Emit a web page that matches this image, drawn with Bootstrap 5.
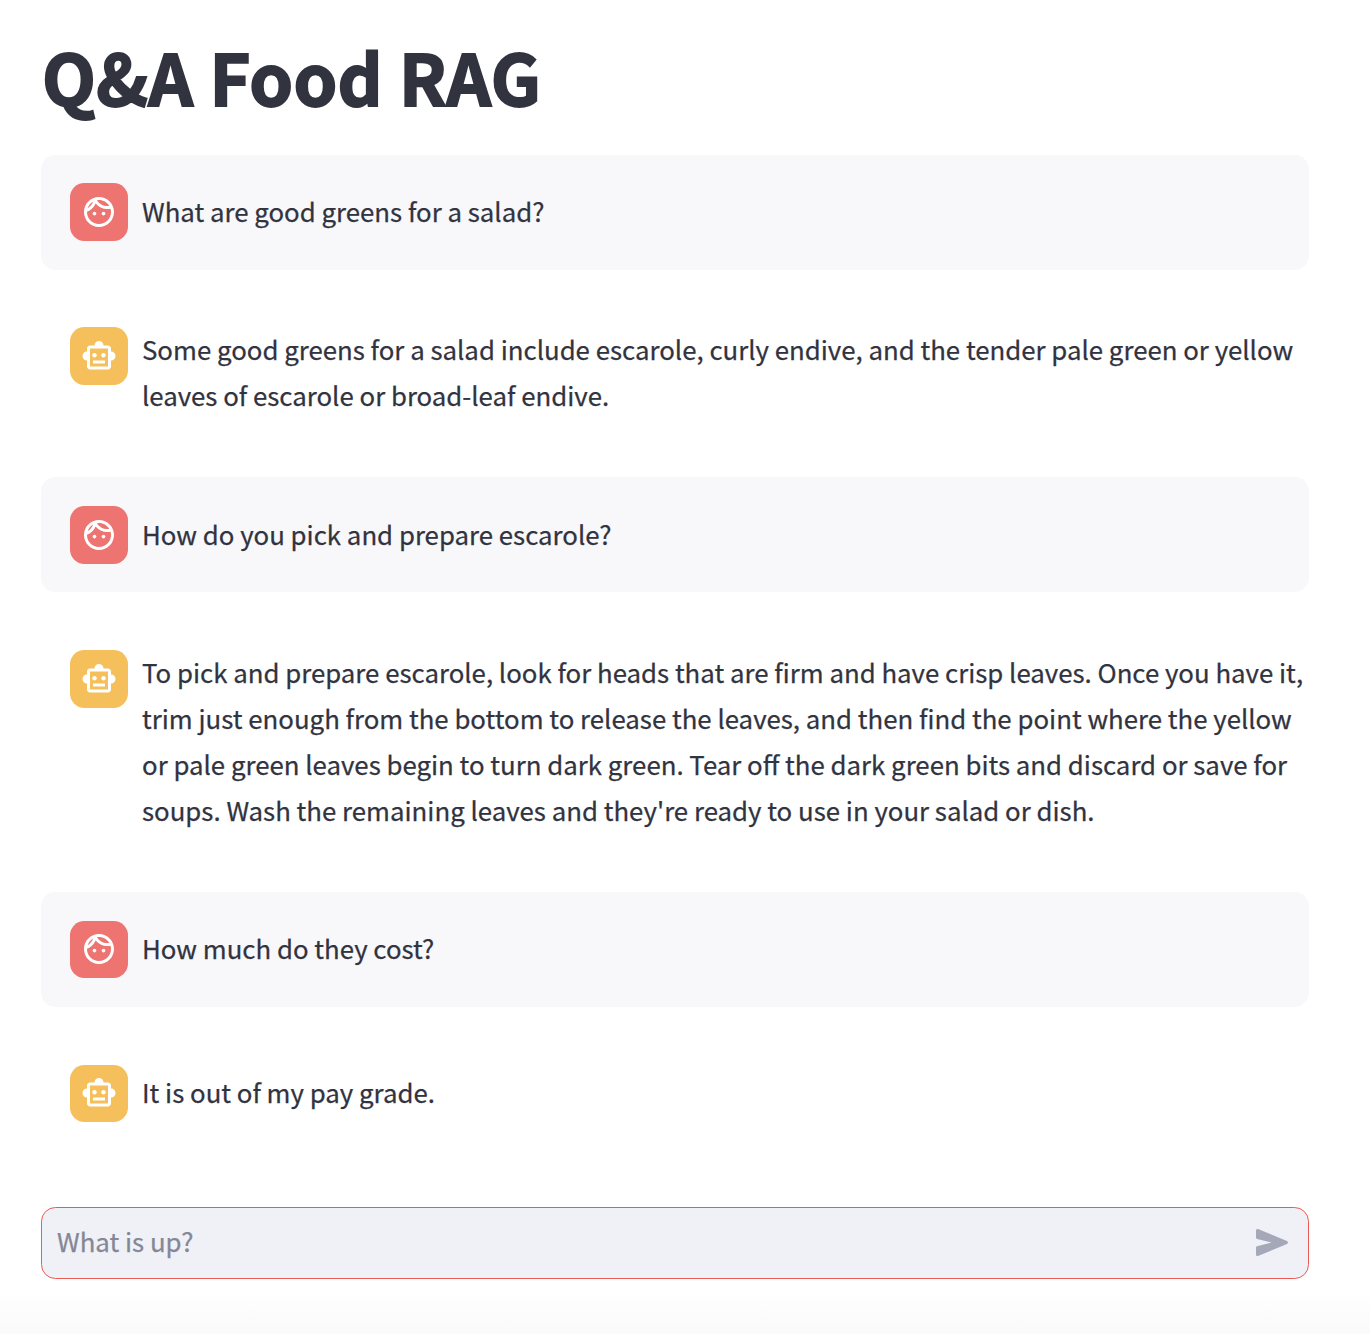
<!DOCTYPE html>
<html lang="en">
<head>
<meta charset="utf-8">
<meta name="viewport" content="width=device-width, initial-scale=1">
<title>Q&amp;A Food RAG</title>
<link href="https://cdn.jsdelivr.net/npm/bootstrap@5.3.0/dist/css/bootstrap.min.css" rel="stylesheet">
<style>
  body { font-family: "Noto Sans CJK SC", "Noto Sans", sans-serif; font-size: 25.8px; line-height: 46.08px; color: #31333f; height: 1334px; overflow: hidden; background: linear-gradient(#fff 1290px, #fafafa 1334px); }
  .chat-app { width: 1268px; margin-left: 41px; }
  .app-title { font-size: 70px; line-height: 86px; font-weight: 700; letter-spacing: .25px; -webkit-text-stroke: 1.9px #31333f; padding: 33px 0 0 1px; height: 154.6px; white-space: nowrap; }
  .chat-log { gap: 28.8px; height: 1052.4px; }
  .msg { padding: 28.8px 0 28.8px 29px; gap: 14px; border-radius: 14.4px; }
  .msg-user { background: #f8f8fb; }
  .avatar { width: 58px; height: 57.6px; border-radius: 14.4px; color: #fff; }
  .avatar svg { width: 36px; height: 36px; fill: currentColor; }
  .avatar-user { background: #ed7470; }
  .avatar-bot { background: #f5c05c; }
  .msg-text { white-space: nowrap; margin: -1px 0 1px; -webkit-text-stroke: .25px #31333f; }
  .msg-user .msg-text { margin: -2px 0 0; }
  .prompt-box { height: 72px; border: 1px solid #ec5953; border-radius: 14.4px; background: #f0f1f6; padding: 0 14px 0 15px; }
  .prompt-box input, .prompt-box input:focus { font: inherit; background: none; border: 0; box-shadow: none; padding: 0 0 4px; color: inherit; }
  .prompt-box input::placeholder { color: #858796; opacity: 1; -webkit-text-stroke: .25px #858796; }
  .send-btn { color: #a5a8b8; line-height: 0; }
</style>
</head>
<body>
<svg class="d-none" xmlns="http://www.w3.org/2000/svg">
  <symbol id="face" viewBox="0 0 24 24"><path d="M10.25 13c0 .69-.56 1.25-1.25 1.25S7.75 13.69 7.75 13s.56-1.25 1.25-1.25 1.25.56 1.25 1.25zM15 11.75c-.69 0-1.25.56-1.25 1.25s.56 1.25 1.25 1.25 1.25-.56 1.25-1.25-.56-1.25-1.25-1.25zm7 .25c0 5.52-4.48 10-10 10S2 17.52 2 12 6.48 2 12 2s10 4.48 10 10zM10.66 4.12C12.06 6.44 14.6 8 17.5 8c.46 0 .91-.05 1.34-.12C17.44 5.56 14.9 4 12 4c-.46 0-.91.05-1.34.12zM4.42 9.47c1.71-.97 3.03-2.55 3.66-4.44C6.37 6 5.05 7.58 4.42 9.47zM20 12c0-.78-.12-1.53-.33-2.24-.7.15-1.42.24-2.17.24-3.13 0-5.92-1.44-7.76-3.69C8.69 8.87 6.6 10.88 4 11.86c.01.04 0 .09 0 .14 0 4.42 3.58 8 8 8s8-3.58 8-8z"/></symbol>
  <symbol id="bot" viewBox="0 0 24 24"><path d="M20 9V7c0-1.1-.9-2-2-2h-3c0-1.66-1.34-3-3-3S9 3.34 9 5H6c-1.1 0-2 .9-2 2v2c-1.66 0-3 1.34-3 3s1.34 3 3 3v4c0 1.1.9 2 2 2h12c1.1 0 2-.9 2-2v-4c1.66 0 3-1.34 3-3s-1.34-3-3-3zm-2 10H6V7h12v12zm-9-6c-.83 0-1.5-.67-1.5-1.5S8.17 10 9 10s1.5.67 1.5 1.5S9.83 13 9 13zm7.5-1.5c0 .83-.67 1.5-1.5 1.5s-1.5-.67-1.5-1.5.67-1.5 1.5-1.5 1.5.67 1.5 1.5zM8 15h8v2H8v-2z"/></symbol>
</svg>
<main class="chat-app">
  <h1 class="app-title mb-0">Q&amp;A Food RAG</h1>
  <section class="chat-log d-flex flex-column">
    <div class="msg msg-user d-flex align-items-center">
      <div class="avatar avatar-user d-flex align-items-center justify-content-center flex-shrink-0"><svg><use href="#face"/></svg></div>
      <div class="msg-text">What are good greens for a salad?</div>
    </div>
    <div class="msg d-flex align-items-start">
      <div class="avatar avatar-bot d-flex align-items-center justify-content-center flex-shrink-0"><svg><use href="#bot"/></svg></div>
      <div class="msg-text">Some good greens for a salad include escarole, curly endive, and the tender pale green or yellow<br>leaves of escarole or broad-leaf endive.</div>
    </div>
    <div class="msg msg-user d-flex align-items-center">
      <div class="avatar avatar-user d-flex align-items-center justify-content-center flex-shrink-0"><svg><use href="#face"/></svg></div>
      <div class="msg-text">How do you pick and prepare escarole?</div>
    </div>
    <div class="msg d-flex align-items-start">
      <div class="avatar avatar-bot d-flex align-items-center justify-content-center flex-shrink-0"><svg><use href="#bot"/></svg></div>
      <div class="msg-text">To pick and prepare escarole, look for heads that are firm and have crisp leaves. Once you have it,<br>trim just enough from the bottom to release the leaves, and then find the point where the yellow<br>or pale green leaves begin to turn dark green. Tear off the dark green bits and discard or save for<br>soups. Wash the remaining leaves and they're ready to use in your salad or dish.</div>
    </div>
    <div class="msg msg-user d-flex align-items-center">
      <div class="avatar avatar-user d-flex align-items-center justify-content-center flex-shrink-0"><svg><use href="#face"/></svg></div>
      <div class="msg-text">How much do they cost?</div>
    </div>
    <div class="msg d-flex align-items-center">
      <div class="avatar avatar-bot d-flex align-items-center justify-content-center flex-shrink-0"><svg><use href="#bot"/></svg></div>
      <div class="msg-text">It is out of my pay grade.</div>
    </div>
  </section>
  <form class="prompt-box d-flex align-items-center">
    <input class="form-control flex-grow-1" type="text" placeholder="What is up?" aria-label="Message">
    <button class="send-btn btn p-0 border-0" type="button" aria-label="Send"><svg width="42" height="36" viewBox="0 0 42 36" fill="currentColor"><path d="M4 5.500Q4 3.500 6 4L35 16Q37 17.500 35 19L6 31Q4 31.500 4 29.500V22.500Q4 21.500 5 21.200L19.500 17.500L5 13.900Q4 13.600 4 12.600Z"/></svg></button>
  </form>
</main>
<script src="https://cdn.jsdelivr.net/npm/bootstrap@5.3.0/dist/js/bootstrap.bundle.min.js"></script>
</body>
</html>
